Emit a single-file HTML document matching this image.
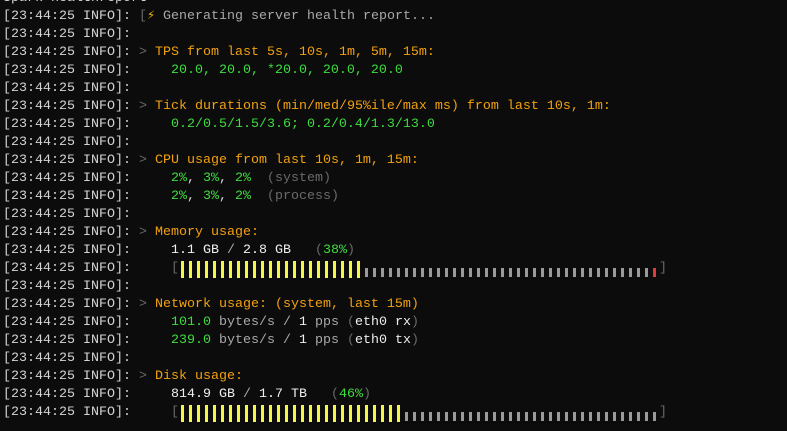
<!DOCTYPE html>
<html><head><meta charset="utf-8"><style>
html,body{margin:0;padding:0;background:#0c0c0c;width:787px;height:431px;overflow:hidden}
pre{position:absolute;left:3px;top:-10px;margin:0;font-family:"Liberation Mono",monospace;font-size:13.33px;line-height:18px;color:#d4d4d4;white-space:pre}
.o{color:#f2a10f}.g{color:#3fdc3f}.d{color:#6a6a6a}.m{color:#a9a9a9}.w{color:#eeeeee}
.b{display:inline-block;width:8px;height:18px;vertical-align:top}
.y{background:linear-gradient(#f6f64a,#f6f64a) no-repeat 2px 1px/3px 17px}
.s{background:linear-gradient(#9a9a9a,#9a9a9a) no-repeat 2px 8px/3px 9px}
.r{background:linear-gradient(#e03a3a,#e03a3a) no-repeat 2px 8px/3px 9px}
</style></head><body>
<pre id="p"></pre>
<script>
const P='[23:44:25 INFO]: ';
function bar(y,s,r){let h='<span class="d">[</span>';for(let i=0;i<y;i++)h+='<span class="b y"></span>';for(let i=0;i<s;i++)h+='<span class="b s"></span>';for(let i=0;i<r;i++)h+='<span class="b r"></span>';return h+'<span class="d">]</span>';}
const L=[
'Spark healthreport',
P+'<span class="d">[</span><span style="color:#f5b800">⚡</span><span class="m"> Generating server health report...</span>',
P,
P+'<span class="d">&gt; </span><span class="o">TPS from last 5s, 10s, 1m, 5m, 15m:</span>',
P+'    <span class="g">20.0, 20.0, *20.0, 20.0, 20.0</span>',
P,
P+'<span class="d">&gt; </span><span class="o">Tick durations (min/med/95%ile/max ms) from last 10s, 1m:</span>',
P+'    <span class="g">0.2/0.5/1.5/3.6; 0.2/0.4/1.3/13.0</span>',
P,
P+'<span class="d">&gt; </span><span class="o">CPU usage from last 10s, 1m, 15m:</span>',
P+'    <span class="g">2%</span>, <span class="g">3%</span>, <span class="g">2%</span>  <span class="d">(system)</span>',
P+'    <span class="g">2%</span>, <span class="g">3%</span>, <span class="g">2%</span>  <span class="d">(process)</span>',
P,
P+'<span class="d">&gt; </span><span class="o">Memory usage:</span>',
P+'    <span class="w">1.1 GB</span> <span class="m">/</span> <span class="w">2.8 GB</span>   <span class="d">(</span><span class="g">38%</span><span class="d">)</span>',
P+'    '+bar(23,36,1),
P,
P+'<span class="d">&gt; </span><span class="o">Network usage: (system, last 15m)</span>',
P+'    <span class="g">101.0</span> <span class="m">bytes/s / </span><span class="w">1</span><span class="m"> pps </span><span class="d">(</span><span class="w">eth0 rx</span><span class="d">)</span>',
P+'    <span class="g">239.0</span> <span class="m">bytes/s / </span><span class="w">1</span><span class="m"> pps </span><span class="d">(</span><span class="w">eth0 tx</span><span class="d">)</span>',
P,
P+'<span class="d">&gt; </span><span class="o">Disk usage:</span>',
P+'    <span class="w">814.9 GB</span> <span class="m">/</span> <span class="w">1.7 TB</span>   <span class="d">(</span><span class="g">46%</span><span class="d">)</span>',
P+'    '+bar(28,32,0)
];
document.getElementById('p').innerHTML=L.join('\n');
</script>
</body></html>
